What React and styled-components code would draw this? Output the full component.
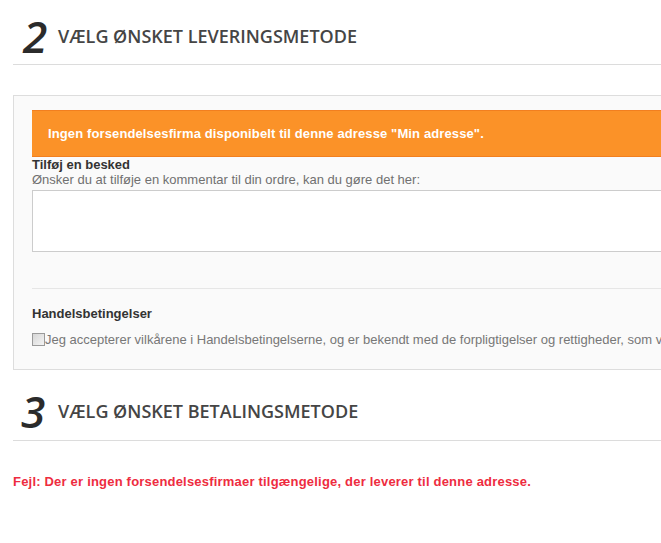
import styled, { createGlobalStyle } from 'styled-components';

const GlobalStyle = createGlobalStyle`
  html, body {
    margin: 0;
    padding: 0;
    background: #ffffff;
    overflow: hidden;
  }
  body {
    font-family: "Liberation Sans", Arial, sans-serif;
  }
`;

const Page = styled.div`
  width: 1000px;
  padding: 0 0 40px 13px;
`;

const StepHeading = styled.div`
  display: flex;
  align-items: center;
  padding: ${props => props.$first ? '15px 0 7px 10px' : '20px 0 8px 8px'};
  border-bottom: 1px solid #dcdcdc;
`;

const StepNumber = styled.span`
  width: ${props => props.$first ? '35px' : '37px'};
  font-family: "Open Sans", sans-serif;
  font-style: italic;
  font-weight: 600;
  font-size: 44px;
  line-height: 42px;
  color: #2b2b2b;
`;

const StepTitle = styled.h2`
  margin: 0;
  font-family: "Open Sans", sans-serif;
  font-weight: 600;
  font-size: 18px;
  line-height: 18px;
  color: #454545;
  text-transform: uppercase;
`;

const Panel = styled.div`
  margin-top: 30px;
  background: #fafafa;
  border: 1px solid #dddddd;
  padding: 14px 18px 22px;
`;

const Alert = styled.div`
  background: #fb9228;
  border-top: 1px solid #f27f1f;
  border-bottom: 1px solid #f27f1f;
  color: #ffffff;
  font-weight: bold;
  font-size: 13px;
  letter-spacing: 0.12px;
  line-height: 45px;
  padding-left: 16px;
`;

const Label = styled.div`
  font-weight: bold;
  font-size: 13px;
  line-height: 16px;
  color: #333333;
`;

const Hint = styled.div`
  font-size: 13px;
  line-height: 14px;
  color: #707070;
`;

const Comment = styled.textarea`
  display: block;
  box-sizing: border-box;
  width: 100%;
  height: 62px;
  margin-top: 3px;
  border: 1px solid #cccccc;
  background: #ffffff;
  resize: none;
`;

const Divider = styled.hr`
  margin: 36px 0 17px;
  border: 0;
  border-top: 1px solid #e6e6e6;
`;

const TermsRow = styled.label`
  display: flex;
  align-items: center;
  margin-top: 10px;
  font-size: 13px;
  line-height: 15px;
  color: #777777;
  white-space: nowrap;
`;

const Check = styled.input`
  appearance: none;
  flex: none;
  width: 13px;
  height: 13px;
  margin: 0;
  border: 1px solid #9a9a9a;
  background: linear-gradient(135deg, #d6d6d6, #f4f4f4);
  box-sizing: border-box;
`;

const ErrorText = styled.p`
  margin: 33px 0 0;
  font-weight: bold;
  font-size: 13px;
  letter-spacing: 0.2px;
  line-height: 15px;
  color: #ee2c40;
`;

export default function App() {
  return (
    <Page>
      <GlobalStyle />
      <StepHeading $first>
        <StepNumber $first>2</StepNumber>
        <StepTitle>Vælg ønsket leveringsmetode</StepTitle>
      </StepHeading>

      <Panel>
        <Alert>Ingen forsendelsesfirma disponibelt til denne adresse "Min adresse".</Alert>
        <Label>Tilføj en besked</Label>
        <Hint>Ønsker du at tilføje en kommentar til din ordre, kan du gøre det her:</Hint>
        <Comment />
        <Divider />
        <Label>Handelsbetingelser</Label>
        <TermsRow>
          <Check type="checkbox" />
          Jeg accepterer vilkårene i Handelsbetingelserne, og er bekendt med de forpligtigelser og rettigheder, som vi
        </TermsRow>
      </Panel>

      <StepHeading>
        <StepNumber>3</StepNumber>
        <StepTitle>Vælg ønsket betalingsmetode</StepTitle>
      </StepHeading>

      <ErrorText>Fejl: Der er ingen forsendelsesfirmaer tilgængelige, der leverer til denne adresse.</ErrorText>
    </Page>
  );
}
